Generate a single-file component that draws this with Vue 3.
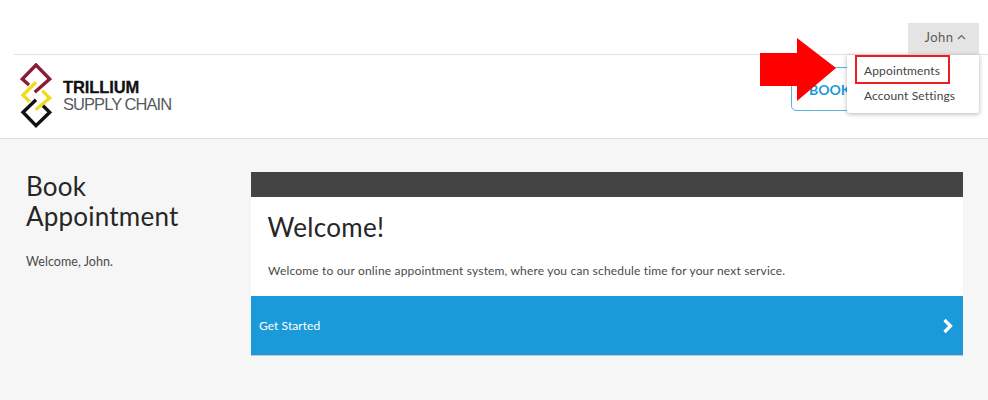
<script setup>
const menuItems = ['Appointments', 'Account Settings']
</script>

<template>
  <div class="page">
    <div class="topbar">
      <div class="user">John <svg class="caret" width="9" height="6" viewBox="0 0 9 6"><path d="M1 5l3.500-3.500L8 5" fill="none" stroke="#666" stroke-width="1.200"/></svg></div>
    </div>
    <header class="header">
      <div class="logo">
        <svg class="mark" width="32" height="66" viewBox="0 0 32 66">
          <path d="M9 22L2.300 16L16 2L29.700 16L14.700 29.300" fill="none" stroke="#8a1c35" stroke-width="3.400"/>
          <path d="M16 19.300L3 32L9.700 38.700M22.300 27.700L29.700 35L15.700 46.700" fill="none" stroke="#efdc1e" stroke-width="3.400"/>
          <path d="M16 36.700L3 49.300L16 62.700L29.700 49.300L23 42.700" fill="none" stroke="#111" stroke-width="3.400"/>
        </svg>
        <div class="logo-text">
          <strong>TRILLIUM</strong>
          <span>SUPPLY CHAIN</span>
        </div>
      </div>
      <button class="book">BOOK</button>
    </header>
    <main class="main">
      <aside class="side">
        <h1>Book Appointment</h1>
        <p>Welcome, John.</p>
      </aside>
      <section class="card">
        <div class="card-bar"></div>
        <div class="card-body">
          <h2>Welcome!</h2>
          <p>Welcome to our online appointment system, where you can schedule time for your next service.</p>
        </div>
        <div class="cta">
          <span>Get Started</span>
          <svg width="12" height="16" viewBox="0 0 12 16"><path d="M2.500 2l6 6-6 6" fill="none" stroke="#fff" stroke-width="3.200"/></svg>
        </div>
      </section>
    </main>
    <div class="menu">
      <div v-for="(item, i) in menuItems" :key="item" class="menu-item" :class="{ hot: i === 0 }">{{ item }}</div>
    </div>
    <svg class="arrow" width="76" height="63" viewBox="0 0 76 63"><path d="M0 15H37V0L76 30L37 63V48H0Z" fill="#fe0000"/></svg>
  </div>
</template>

<style scoped>
.page { position: relative; width: 988px; height: 400px; overflow: hidden; background: #f6f6f6; font-family: Lato, "Noto Sans", sans-serif; color: #4a4a4a; }
.page::before { content: ""; position: absolute; left: 0; top: 0; width: 14px; height: 55px; background: #fff; }
.topbar { position: relative; height: 54px; margin-left: 14px; padding-right: 9px; background: #fff; display: flex; justify-content: flex-end; align-items: flex-end; border-bottom: 1px solid #e2e2e2; }
.user { width: 71px; height: 31px; box-sizing: border-box; padding: 0 0 3px 3px; background: #e4e4e4; display: flex; align-items: center; justify-content: center; gap: 3px; font-size: 13px; letter-spacing: .5px; color: #5c5c5c; }
.header { height: 84px; box-sizing: border-box; background: #fff; border-bottom: 1px solid #dedede; display: flex; align-items: flex-start; justify-content: space-between; padding: 12px 14px 0 20px; }
.logo { display: flex; align-items: center; gap: 11px; margin-top: -4px; }
.mark { display: block; }
.logo-text { display: flex; flex-direction: column; font-family: "Liberation Sans", sans-serif; line-height: 17px; color: #111; }
.logo-text strong { font-size: 16.500px; letter-spacing: -.1px; font-weight: 700; -webkit-text-stroke: .3px #111; }
.logo-text span { font-size: 16.500px; letter-spacing: -.95px; color: #555a60; }
.book { width: 183px; height: 44px; border: 1px solid #5cb3dc; border-radius: 5px; background: #fff; color: #1b9ad9; font: 700 14px Lato, sans-serif; text-align: left; padding-left: 17px; letter-spacing: 0; }
.main { display: flex; padding: 33px 25px 0 26px; }
.side { width: 225px; }
.side h1 { margin: -1px 0 0; width: 170px; font-size: 26px; line-height: 30px; font-weight: 400; color: #262626; letter-spacing: .22px; }
.side p { margin: 23px 0 0; font-size: 12.500px; line-height: 16px; letter-spacing: .05px; }
.card { flex: 1; background: #fff; box-shadow: 0 1px 0 rgba(0,0,0,.2); }
.card-bar { height: 25px; background: #444; }
.card-body { height: 99px; padding: 0 16px 0 17px; box-sizing: border-box; overflow: hidden; }
.card-body h2 { margin: 15px 0 0 -.500px; font-size: 26px; line-height: 31px; font-weight: 400; color: #262626; letter-spacing: .3px; }
.card-body p { margin: 20px 0 0; font-size: 12px; line-height: 16px; letter-spacing: .17px; }
.cta { height: 59px; background: #1b9ad9; display: flex; align-items: center; justify-content: space-between; padding: 0 9px 0 8px; color: #fff; font-size: 12px; letter-spacing: .06px; }
.menu { position: absolute; left: 847px; top: 55px; width: 132px; height: 58px; box-sizing: border-box; background: #fff; border-radius: 0 0 3px 3px; box-shadow: 0 1px 5px rgba(0,0,0,.3); padding-top: 3px; }
.menu-item { height: 25px; padding-left: 17px; display: flex; align-items: center; font-size: 12px; letter-spacing: .13px; color: #444; }
.menu-item.hot { position: relative; }
.menu-item.hot::after { content: ""; position: absolute; left: 8px; top: -3px; width: 95px; height: 29px; border: 2px solid #ee1c25; box-sizing: border-box; }
.arrow { position: absolute; left: 760px; top: 38px; }
</style>
